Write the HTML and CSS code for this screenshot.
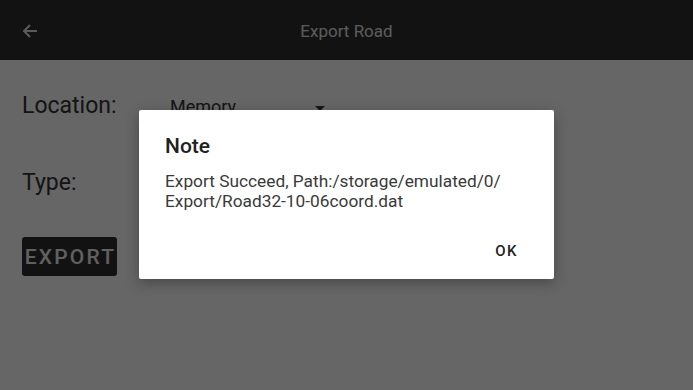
FILE: index.html
```html
<!DOCTYPE html>
<html lang="en">
<head>
<meta charset="UTF-8">
<meta name="viewport" content="width=device-width, initial-scale=1.0">
<title>Export Road</title>
<link rel="stylesheet" href="styles.css">
</head>
<body>

<div class="app">
    <div class="toolbar">
        <span class="back">
            <svg width="16" height="16" viewBox="0 0 16 16">
                <path d="M15 8H2M8 2L2 8l6 6" fill="none" stroke="#e4e4e4" stroke-width="2"/>
            </svg>
        </span>
        <span class="title">Export Road</span>
        <span></span>
    </div>

    <div class="content">
        <div class="form-row">
            <span class="label">Location:</span>
            <span class="spinner">Memory<span class="caret"></span></span>
        </div>
        <div class="form-row type-row">
            <span class="label">Type:</span>
        </div>
        <button class="export-button">EXPORT</button>
    </div>

    <div class="scrim"></div>

    <div class="dialog">
        <div class="dialog-title">Note</div>
        <div class="dialog-text">Export Succeed, Path:/storage/emulated/0/<br>Export/Road32-10-06coord.dat</div>
        <div class="dialog-actions">
            <button class="dialog-button">OK</button>
        </div>
    </div>
</div>

</body>
</html>
```

FILE: styles.css
```css
body {
    margin: 0;
    padding: 0;
    font-family: Roboto, "Noto Sans", sans-serif;
    background-color: #fff;
}
.app {
    position: relative;
    width: 693px;
    height: 390px;
    overflow: hidden;
    background-color: #fff;
}
.toolbar {
    display: grid;
    grid-template-columns: 80px 1fr 80px;
    align-items: center;
    height: 60px;
    background-color: #2d2d2d;
    color: #e4e4e4;
}
.back {
    display: flex;
    padding-left: 22px;
    padding-top: 2px;
}
.title {
    text-align: center;
    font-size: 17px;
    padding-top: 2px;
}
.content {
    padding: 33px 22px 0 22px;
    color: #333;
}
.form-row {
    display: flex;
    align-items: baseline;
    height: 26px;
}
.type-row {
    margin-top: 51px;
}
.label {
    width: 148px;
    font-size: 23px;
    line-height: 26px;
}
.spinner {
    position: relative;
    width: 155px;
    font-size: 18px;
    line-height: 26px;
}
.caret {
    position: absolute;
    right: 0;
    top: 12px;
    width: 0;
    height: 0;
    border-left: 5px solid transparent;
    border-right: 5px solid transparent;
    border-top: 5px solid #333;
}
.export-button {
    display: flex;
    align-items: center;
    justify-content: center;
    width: 95px;
    height: 39px;
    margin-top: 41px;
    padding: 0 0 0 2px;
    border: none;
    border-radius: 3px;
    background-color: #2d2d2d;
    color: #f0f0f0;
    font-family: Roboto, sans-serif;
    font-size: 21px;
    font-weight: 500;
    letter-spacing: 2.2px;
}

/* dialog */
.scrim {
    position: absolute;
    top: 0;
    left: 0;
    right: 0;
    bottom: 0;
    background-color: rgba(0, 0, 0, 0.6);
}
.dialog {
    position: absolute;
    left: 139px;
    top: 110px;
    width: 415px;
    height: 169px;
    box-sizing: border-box;
    padding: 22px 26px 0 26px;
    background-color: #fff;
    border-radius: 2px;
    box-shadow: 0 4px 14px rgba(0, 0, 0, 0.3);
}
.dialog-title {
    font-size: 21px;
    font-weight: 500;
    line-height: 28px;
    color: #212121;
}
.dialog-text {
    margin-top: 11px;
    font-size: 17.3px;
    line-height: 20px;
    color: #3a3a3a;
}
.dialog-actions {
    display: flex;
    justify-content: flex-end;
    margin-top: 30px;
}
.dialog-button {
    padding: 0;
    margin-right: 10px;
    border: none;
    background: none;
    font-family: Roboto, sans-serif;
    font-size: 15px;
    font-weight: 500;
    line-height: 20px;
    letter-spacing: 1.5px;
    color: #222;
}
```
